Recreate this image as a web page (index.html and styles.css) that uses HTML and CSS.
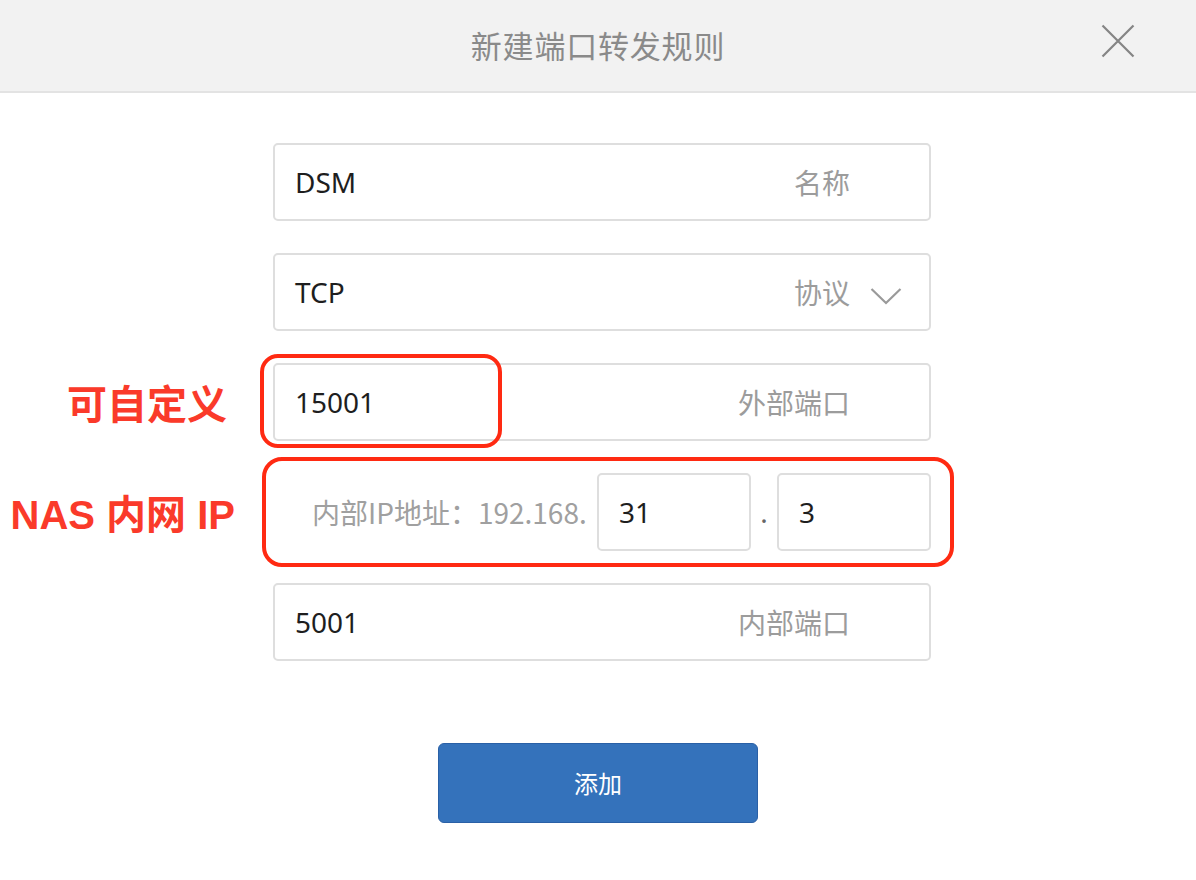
FILE: index.html
```html
<!DOCTYPE html>
<html lang="zh-CN">
<head>
<meta charset="utf-8">
<title>新建端口转发规则</title>
<link rel="stylesheet" href="styles.css">
</head>
<body>
<div class="dialog">
  <header class="dlg-head">
    <h1 class="dlg-title">新建端口转发规则</h1>
    <button class="dlg-close" aria-label="关闭">
      <svg width="34" height="34" viewBox="0 0 34 34"><path d="M1.5 1.5 L32.5 32.5 M32.5 1.5 L1.5 32.5" stroke="#858585" stroke-width="2.2" fill="none"/></svg>
    </button>
  </header>
  <main class="form">
    <div class="field">
      <span class="val">DSM</span>
      <span class="lbl">名称</span>
    </div>
    <div class="field field-select">
      <span class="val">TCP</span>
      <span class="lbl">协议</span>
      <svg class="chev" width="32" height="18" viewBox="0 0 32 18"><path d="M1.5 2 L16 16 L30.5 2" stroke="#9a9a9a" stroke-width="2.2" fill="none"/></svg>
    </div>
    <div class="field">
      <span class="val">15001</span>
      <span class="lbl">外部端口</span>
      <span class="note note-1">可自定义</span>
      <span class="mark mark-1"></span>
    </div>
    <div class="ip-row">
      <span class="ip-lbl">内部IP地址：192.168.</span>
      <span class="ip-box">31</span>
      <span class="ip-dot">.</span>
      <span class="ip-box">3</span>
      <span class="note note-2">NAS 内网 IP</span>
      <span class="mark mark-2"></span>
    </div>
    <div class="field">
      <span class="val">5001</span>
      <span class="lbl">内部端口</span>
    </div>
    <div class="actions">
      <button class="btn-add">添加</button>
    </div>
  </main>
</div>
</body>
</html>
```

FILE: styles.css
```css
* { box-sizing: border-box; }
html, body { margin: 0; padding: 0; background: #fff; }
body {
  font-family: "Noto Sans", "Noto Sans CJK SC", sans-serif;
  color: #1e1e1e;
  width: 1196px;
  height: 880px;
  overflow: hidden;
}
.dialog { width: 1196px; }
.dlg-head {
  height: 93px;
  background: #f2f2f2;
  border-bottom: 2px solid #e3e3e3;
  display: flex;
  align-items: center;
  justify-content: center;
  position: relative;
}
.dlg-title {
  margin: 0;
  font-family: "Noto Sans CJK SC", sans-serif;
  font-weight: 400;
  font-size: 31px;
  color: #8a8a8a;
  letter-spacing: 0.8px;
  padding-bottom: 2px;
}
.dlg-close {
  position: absolute;
  right: 61px;
  top: 24px;
  border: 0;
  background: none;
  padding: 0;
  width: 34px;
  height: 34px;
  display: flex;
}
.form {
  margin-left: 273px;
  width: 658px;
  padding-top: 50px;
  display: flex;
  flex-direction: column;
  gap: 32px;
}
.field {
  position: relative;
  height: 78px;
  border: 2px solid #dedede;
  border-radius: 5px;
  display: flex;
  align-items: center;
  padding: 0 79px 0 20px;
  font-size: 28px;
}
.val { flex: 1; color: #1e1e1e; }
.lbl {
  font-family: "Noto Sans CJK SC", sans-serif;
  color: #9c9c9c;
  font-size: 28px;
}
.field-select .chev {
  position: absolute;
  right: 27px;
  top: 32px;
}
.ip-row {
  position: relative;
  height: 78px;
  display: flex;
  align-items: center;
  padding-left: 39px;
}
.ip-lbl {
  font-family: "Noto Sans CJK SC", sans-serif;
  font-size: 28px;
  color: #a0a0a0;
  margin-right: auto;
}
.ip-box {
  width: 154px;
  height: 78px;
  border: 2px solid #dedede;
  border-radius: 5px;
  display: flex;
  align-items: center;
  padding-left: 20px;
  font-size: 28px;
  color: #1e1e1e;
}
.ip-dot {
  width: 26px;
  text-align: center;
  font-size: 28px;
  color: #666;
}
.note {
  position: absolute;
  top: 50%;
  transform: translateY(-50%);
  font-family: "Liberation Sans", "Noto Sans CJK SC", sans-serif;
  font-weight: 700;
  font-size: 40px;
  color: #fa3a2a;
  white-space: nowrap;
}
.note-1 { right: calc(100% + 48px); }
.note-2 { right: calc(100% + 38px); }
.mark {
  position: absolute;
  border: 4px solid #ff2a12;
  border-radius: 18px;
  pointer-events: none;
}
.mark-1 { left: -15px; top: -11px; width: 242px; height: 94px; }
.mark-2 { left: -11px; top: -16px; width: 692px; height: 110px; border-radius: 20px; }
.actions {
  display: flex;
  margin-top: 50px;
  margin-left: 165px;
}
.btn-add {
  width: 320px;
  height: 80px;
  background: #3472bb;
  border: 1px solid #2a60a6;
  border-radius: 6px;
  color: #fff;
  font-family: "Noto Sans CJK SC", sans-serif;
  font-size: 24px;
  padding: 0 0 2px;
}
```
